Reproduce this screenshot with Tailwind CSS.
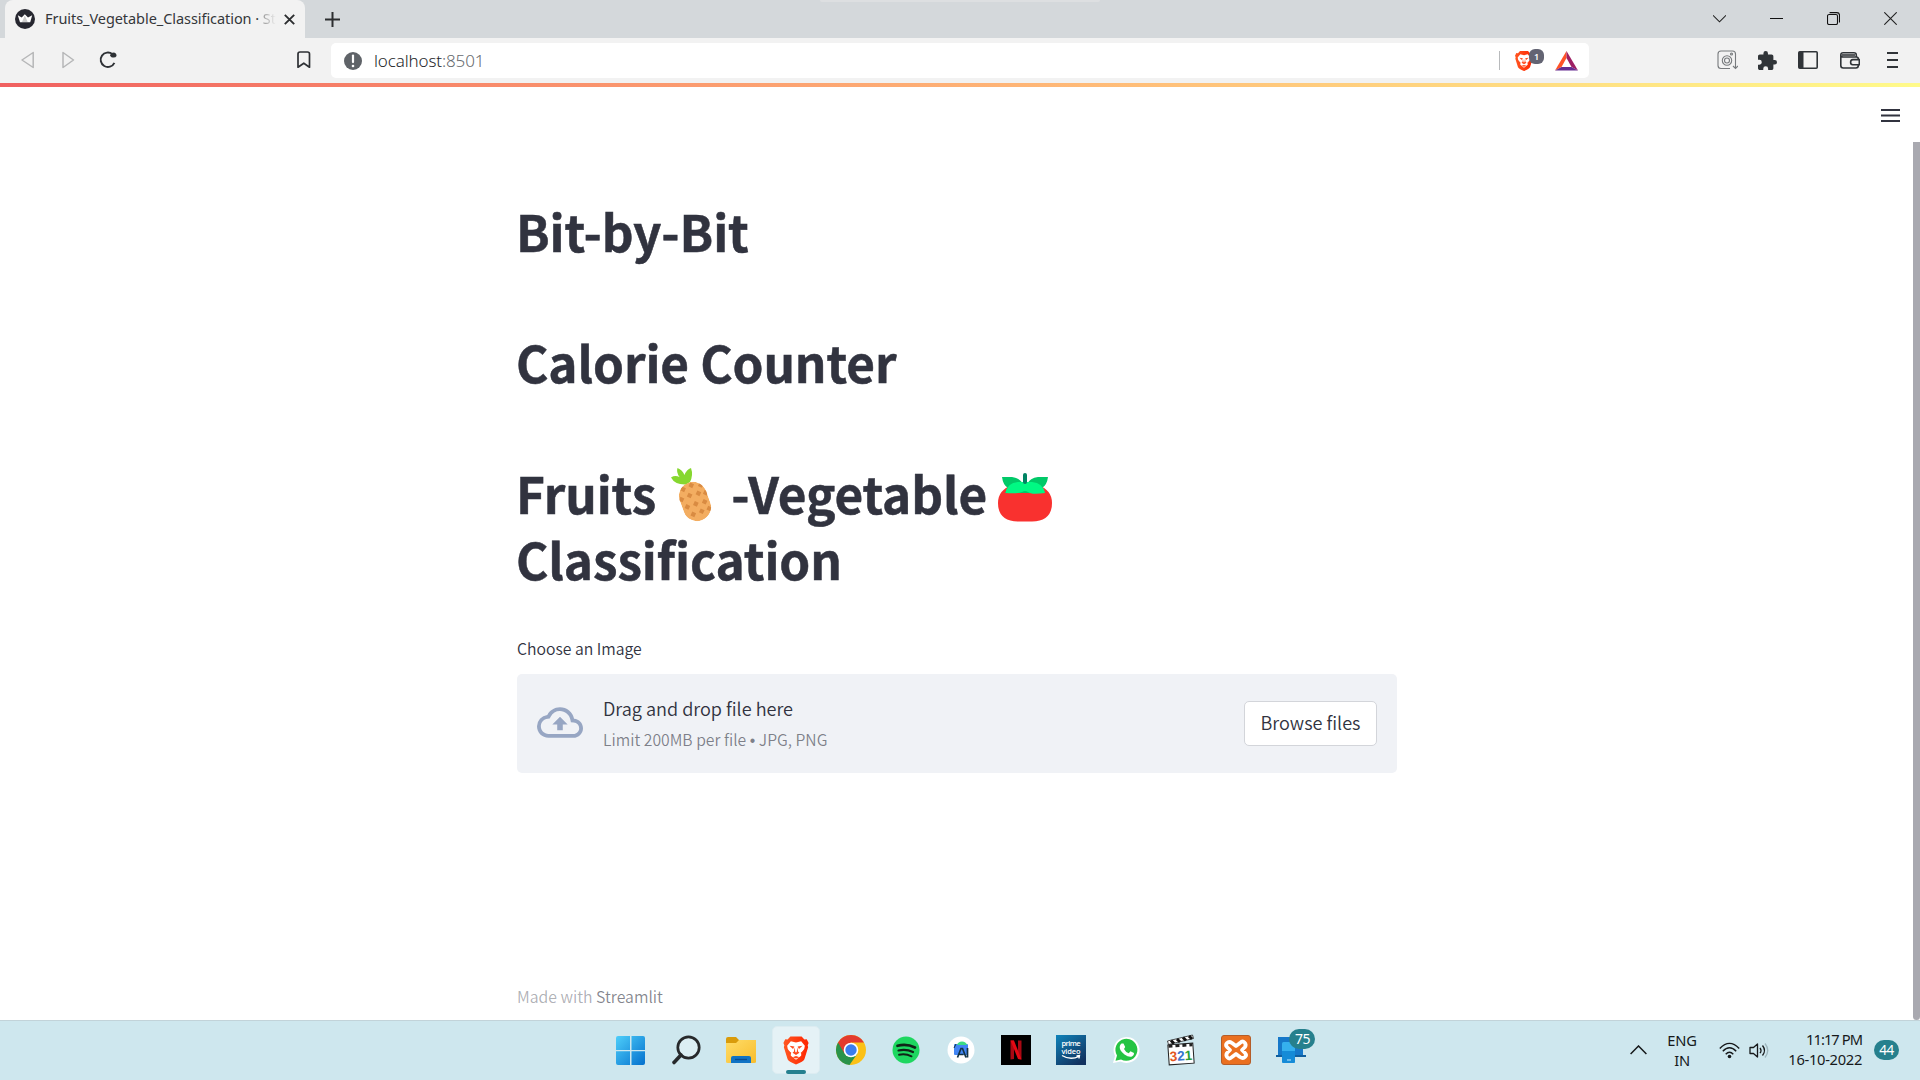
<!DOCTYPE html>
<html lang="en">
<head>
<meta charset="utf-8">
<title>Fruits_Vegetable_Classification · Streamlit</title>
<script src="https://cdn.jsdelivr.net/npm/@tailwindcss/browser@4"></script>
</head>
<body class="flex h-[1080px] w-[1920px] flex-col overflow-hidden bg-white font-['Noto_Sans',sans-serif]">

<!-- Tab strip -->
<header class="relative flex h-[38px] shrink-0 items-center bg-[#d4d8db] pl-[5px]">
  <div class="absolute left-[820px] top-0 h-[2px] w-[280px] rounded-b bg-[#dddfe1]"></div>
  <div class="flex h-full w-[300px] items-center rounded-t-lg bg-[#f2f2f2] pl-[10px]">
    <svg class="h-5 w-5 shrink-0" viewBox="0 0 20 20"><circle cx="10" cy="10" r="10" fill="#262730"/><path d="M2.8 6.2 6.7 8.4 9.8 5.2 13 8.4 17.2 6.2 15.2 13.2H5Z" fill="#fff"/><path d="M7 13 9.8 6.5 12.7 13Z" fill="#ccc"/></svg>
    <div class="ml-[10px] w-[232px] whitespace-nowrap pb-[2px] text-[14.5px] leading-5 tracking-[-0.06px] text-[#35373a]"><span>Fruits_Vegetable_Classification · </span><span class="bg-linear-to-r from-[#9a9a9a] to-[#f2f2f2] bg-clip-text text-transparent">St</span></div>
    <svg class="ml-[7px] h-[11px] w-[11px]" viewBox="0 0 11 11" stroke="#2c2e30" stroke-width="1.9"><path d="m.8.8 9.400 9.400M10.200.8.8 10.200"/></svg>
  </div>
  <svg class="ml-[20px] h-[15px] w-[15px]" viewBox="0 0 15 15" stroke="#2c2e30" stroke-width="2"><path d="M7.500 0v15M0 7.500h15"/></svg>
  <div class="ml-auto flex items-center pr-[23px] pb-px">
    <svg class="mr-[44px] h-[13px] w-[13px]" viewBox="0 0 13 13" fill="none" stroke="#222" stroke-width="1.1"><path d="m0 3.300 6.500 6.500L13 3.300"/></svg>
    <svg class="mr-[44px] h-[13px] w-[13px]" viewBox="0 0 13 13" stroke="#111" stroke-width="1"><path d="M0 6.500h13"/></svg>
    <svg class="mr-[44px] h-[13px] w-[13px]" viewBox="0 0 13 13" fill="none" stroke="#111" stroke-width="1.1"><rect x=".5" y="2.500" width="10" height="10" rx="1.600"/><path d="M2.600.6h7.200q2.700 0 2.700 2.700v7.300"/></svg>
    <svg class="h-[13px] w-[13px]" viewBox="0 0 13 13" stroke="#222" stroke-width="1.1"><path d="m.3.3 12.400 12.400M12.700.3.3 12.700"/></svg>
  </div>
</header>

<!-- Toolbar -->
<nav class="flex h-[45px] shrink-0 items-center bg-[#f2f2f2] pl-[20px]">
  <svg class="-mt-px h-[18px] w-4" viewBox="0 0 16 18" fill="none" stroke="#b6b7b8" stroke-width="1.5" stroke-linejoin="round"><path d="M13.200 1.500v15L2 9Z"/></svg>
  <svg class="-mt-px ml-[25px] h-[18px] w-4" viewBox="0 0 16 18" fill="none" stroke="#b6b7b8" stroke-width="1.5" stroke-linejoin="round"><path d="M2 1.500v15L12.500 9Z"/></svg>
  <svg class="-mt-px ml-[22px] h-[18px] w-[18px]" viewBox="0 0 18 18" fill="none" stroke="#2e3135" stroke-width="1.900"><path d="M13.500 3.200A7.200 7.200 0 1 0 15.400 11.800"/><path d="M11 4.800Q11.500 1.400 15 1.400 17.700 2 17.500 5 16.500 7.200 12.500 6.300Z" fill="#2e3135" stroke="none"/></svg>
  <svg class="-mt-px ml-[180px] h-[18px] w-[14px]" viewBox="0 0 14 18" fill="none" stroke="#2e3135" stroke-width="1.700" stroke-linejoin="round"><path d="M1 3Q1 1 3 1h7.500Q12.500 1 12.500 3v13.200L6.800 12.200 1 16.200Z"/></svg>
  <div class="ml-[20px] flex h-[35px] w-[1258px] items-center rounded-[5px] bg-white pl-[13px]">
    <svg class="h-[18px] w-[18px]" viewBox="0 0 18 18"><circle cx="9" cy="9" r="9" fill="#5f6368"/><path d="M9 3.500v6.600" stroke="#fff" stroke-width="2.200" stroke-linecap="round"/><circle cx="9" cy="14" r="1.300" fill="#fff"/></svg>
    <div class="ml-[12px] text-[17px] leading-6 font-light tracking-[-0.12px] text-[#25272b]">localhost<span class="text-[#686b6f]">:8501</span></div>
    <div class="ml-auto h-[19px] w-px bg-[#b8babc]"></div>
    <div class="relative ml-[14px] mr-[21px] h-[22px] w-[20px]">
      <svg class="h-[22px] w-5" viewBox="0 0 30 32"><use href="#lion"/></svg>
      <span class="absolute -top-px left-[15px] h-[15px] w-[15px] rounded-[6px] bg-[#636473] text-center text-[9px] leading-[15px] font-semibold text-white">1</span>
    </div>
    <svg class="mr-[11px] h-5 w-[23px]" viewBox="0 0 23 20"><path d="M11.500 0 0 19.500 6.500 16 11.500 7Z" fill="#ff5328"/><path d="M11.500 0 23 19.500 16.500 16 11.500 7Z" fill="#9e1f63"/><path d="M0 19.500h23L16.500 16h-10Z" fill="#662d91"/></svg>
  </div>
  <div class="ml-auto flex items-center pr-[22px] pb-px text-[#303438]">
    <svg class="mr-[20px] h-5 w-[21px]" viewBox="0 0 21 20" fill="none" stroke="#777a7d" stroke-width="1.100"><path d="M13 18.500H4Q1 18.500 1 15.500V4Q1 1 4 1h11.500q3 0 3 3v14"/><circle cx="10" cy="10.500" r="4.700"/><circle cx="10" cy="10.500" r="2.500"/><circle cx="14.500" cy="4" r="1"/><path d="m16 16 2.500 2.500L21 16"/></svg>
    <svg class="mr-[21px] h-[19px] w-[19px]" viewBox="2 1 21 21" fill="currentColor"><path d="M20.500 11H19V7c0-1.100-.9-2-2-2h-4V3.500a2.500 2.500 0 0 0-5 0V5H4c-1.100 0-1.990.9-1.990 2v3.800H3.500a2.700 2.700 0 0 1 0 5.400H2V20c0 1.100.9 2 2 2h3.800v-1.500a2.700 2.700 0 0 1 5.400 0V22H17c1.100 0 2-.9 2-2v-4h1.500a2.500 2.500 0 0 0 0-5z"/></svg>
    <svg class="mr-[22px] h-[18px] w-5" viewBox="0 0 20 18"><rect x=".8" y=".8" width="18.400" height="16.400" rx="1" fill="none" stroke="currentColor" stroke-width="1.600"/><path d="M1 1h4.500v16H1Z" fill="currentColor"/></svg>
    <svg class="mr-[27px] h-[17px] w-5" viewBox="0 0 20 17" fill="none" stroke="currentColor" stroke-width="1.600"><path d="M.8 3v10.500q0 2.500 2.500 2.500h12.500q2.500 0 2.500-2.500V7q0-2-2-2H3.200Q.8 5 .8 2.900T3.200.8h10.600q2.500 0 2.500 2.200v2"/><path d="M19.300 7.600h-6.500q-2.200.2-2.200 2.600t2.200 2.600h6.500Z" fill="#f2f2f2"/><path d="M2 3h13"/></svg>
    <svg class="h-4 w-[11px]" viewBox="0 0 11 16" stroke="currentColor" stroke-width="1.800"><path d="M0 1h11M0 8h11M0 15h11"/></svg>
  </div>
</nav>

<!-- Streamlit app -->
<main class="relative flex h-[937px] shrink-0 flex-col bg-white font-['Noto_Sans_CJK_SC',sans-serif] text-[#31333f]">
  <div class="h-1 bg-linear-to-r from-[#f06060] to-[#fffa8a]"></div>
  <svg class="absolute right-5 top-[26px] h-[13px] w-[19px]" viewBox="0 0 19 13" stroke="#31333f" stroke-width="2"><path d="M0 1h19M0 6.500h19M0 12h19"/></svg>
  <div class="absolute bottom-0 right-0 h-[878px] w-[7px] rounded-b bg-[#a9a9b0]"></div>

  <section class="ml-[517px] flex w-[880px] flex-col pt-[111px]">
    <div class="-ml-px flex flex-col gap-[65px] text-[49.5px] leading-[66px] font-bold tracking-[-0.1px] [-webkit-text-stroke:0.5px_#31333f]">
      <h1>Bit-by-Bit</h1>
      <h1>Calorie Counter</h1>
      <h1>
        <span class="flex items-center whitespace-pre"><span>Fruits</span>
          <svg class="mr-[18px] ml-[15px] mt-[4px] h-[54px] w-[42px]" viewBox="0 0 42 54">
            <defs><clipPath id="pineBody"><rect x="10" y="13.500" width="28" height="40" rx="14"/></clipPath></defs>
            <path d="M15 16.500Q4 17 0 9.500q4-2.500 8.500-.5Q5 4 6.500 0q5 2 7 7Q15.500 1.500 20 0q2.500 7-1 14Z" fill="#86d72f"/>
            <g transform="rotate(-20 24 33.500)" clip-path="url(#pineBody)"><rect x="10" y="13.500" width="28" height="40" rx="14" fill="#f3ad61"/><path d="m17 15 3 3-3 3-3-3Zm9-1 3 3-3 3-3-3Zm9 3 3 3-3 3-3-3ZM12 24l3 3-3 3-3-3Zm9-1 3 3-3 3-3-3Zm9 1 3 3-3 3-3-3Zm7 2 3 3-3 3-3-3ZM15 33l3 3-3 3-3-3Zm9 0 3 3-3 3-3-3Zm9 1 3 3-3 3-3-3ZM18 42l3 3-3 3-3-3Zm9 0 3 3-3 3-3-3Zm8 0 3 3-3 3-3-3Z" fill="#d98b42"/></g>
          </svg><span>-Vegetable</span>
          <svg class="ml-[11px] mt-[9px] h-[49px] w-[54px]" viewBox="0 0 54 49"><path d="M14 12h26q14 5 14 18 0 18-20 18.500H20Q0 48 0 30 0 17 14 12Z" fill="#f9312f"/><path d="M4 4h10q8 1 11 7h4q3-6 11-7h10q-1 8-6 11l3 5H7l3-5Q5 12 4 4Z" fill="#00c968"/><path d="M7.500 20Q9 10 20 9h14q11 1 13 11-14 2-17-1-3-2-6 0-4 2-16.500 1Z" fill="#00f983"/><path d="M27 2v7" stroke="#008463" stroke-width="4" stroke-linecap="round"/></svg>
        </span>
        Classification
      </h1>
    </div>
    <p class="mt-[43px] text-[15.75px] leading-7 font-[350]">Choose an Image</p>
    <div class="mt-[11px] flex h-[99px] items-center rounded-[5px] bg-[#f0f2f6] px-5 font-[350]">
      <svg class="-mt-[2px] h-[31px] w-[46px]" viewBox="0 4 24 16" fill="#97a6c3"><path d="M19.350 10.040A7.490 7.490 0 0 0 12 4C9.110 4 6.600 5.640 5.350 8.040A5.994 5.994 0 0 0 0 14c0 3.310 2.690 6 6 6h13c2.760 0 5-2.240 5-5 0-2.640-2.050-4.780-4.650-4.960zM19 18H6c-2.210 0-4-1.790-4-4 0-2.050 1.530-3.760 3.560-3.970l1.070-.110.500-.950A5.469 5.469 0 0 1 12 6c2.620 0 4.880 1.860 5.390 4.430l.300 1.500 1.530.110A2.980 2.980 0 0 1 22 15c0 1.650-1.350 3-3 3zM8 13h2.550v3h2.900v-3H16l-4-4z"/></svg>
      <div class="ml-5 pt-px">
        <div class="text-[18.1px] leading-[30px]">Drag and drop file here</div>
        <div class="mt-[2px] h-[30px] text-[15.75px] leading-[30px] text-[#31333f]/60">Limit 200MB per file <span class="font-['Liberation_Sans']">•</span> JPG, PNG</div>
      </div>
      <button class="ml-auto h-[45px] w-[133px] rounded-[5px] border border-[#d3d5da] bg-white pb-[3px] text-[18.1px] leading-[40px]">Browse files</button>
    </div>
    <footer class="mt-[210px] text-[15.8px] leading-7 font-[350] text-[#31333f]/40">Made with <span class="text-[#31333f]/60">Streamlit</span></footer>
  </section>
</main>

<!-- Taskbar -->
<aside class="flex h-[60px] shrink-0 items-center border-t border-[#c2d3d9] bg-[#cee7ee] pb-px pl-[603px] text-[#16191b]">
  <div class="grid w-[716px] grid-cols-13 justify-items-center">
    <svg class="h-12 w-12" viewBox="0 0 48 48"><defs><linearGradient id="win" x1="9" y1="9" x2="38" y2="38" gradientUnits="userSpaceOnUse"><stop stop-color="#4fd0fb"/><stop offset="1" stop-color="#0572ce"/></linearGradient></defs><path d="M11 10h12v14H9V12q0-2 2-2Zm13.500 0H36q2 0 2 2v12H24.500ZM9 25.300h14V39H11q-2 0-2-2Zm15.500 0H38V37q0 2-2 2H24.500Z" fill="url(#win)"/></svg>
    <svg class="h-12 w-12" viewBox="0 0 48 48" fill="none"><circle cx="26.500" cy="21.500" r="10.700" fill="#dceef3" stroke="#27292b" stroke-width="2.700"/><path d="m19 29-7 7.500" stroke="#27292b" stroke-width="3.600" stroke-linecap="round"/></svg>
    <svg class="h-12 w-12" viewBox="0 0 48 48"><defs><linearGradient id="fold" x2="1" y2="1"><stop stop-color="#ffdc68"/><stop offset="1" stop-color="#f8bd2c"/></linearGradient></defs><path d="M9 13q0-2 2-2h8l3 3h15q2 0 2 2v4H9Z" fill="#d99b0b"/><path d="M9 17h10l3-3h17v22q0 1-2 1H11q-2 0-2-1Z" fill="url(#fold)"/><path d="M14 37v-5q0-2 2-2h16q2 0 2 2v5Z" fill="#1173c4"/><path d="M18 33.500h12" stroke="#094c91" stroke-width="1.300"/></svg>
    <div class="relative flex h-12 w-12 items-center justify-center rounded-[5px] border border-[#dcecf1] bg-[#e5f2f6]">
      <svg class="h-[31px] w-[28px]" viewBox="0 0 30 32">
        <defs><linearGradient id="brave" x2="1"><stop stop-color="#ff5722"/><stop offset="1" stop-color="#ff2500"/></linearGradient></defs>
        <g id="lion"><path d="M9 1h12l3 3.300 2.500-.3 2 4-1 2.500.5 2-4 13Q23 28 15 31 7 28 6 25.500L2 12.500 2.500 10.500 1.500 8l2-4L6 4.300Z" fill="url(#brave)"/><path d="m9.500 6 5.500 1.300L20.500 6l4 4.800-.7 3.500-3 4.200-.3 3-5.500 4.500-5.500-4.500-.3-3-3-4.200-.7-3.500Z" fill="#fff"/><path d="m8 11 5.300.8-1.500 2.700Zm14 0-5.300.8 1.500 2.700ZM13.500 12.500l-.7 4.500-1.500 1.500L15 20.700l3.700-2.200-1.500-1.500-.7-4.500-.8 5.500h-1.400ZM11.200 23.300 15 21.900l3.800 1.400L15 24.500ZM7 16.500l3 2-1 2Zm16 0-3 2 1 2Z" fill="#ff4a1c"/></g>
      </svg>
      <div class="absolute -bottom-px left-[13px] h-1 w-5 rounded-full bg-[#25808f]"></div>
    </div>
    <svg class="h-12 w-12" viewBox="0 0 48 48"><circle cx="24" cy="24" r="15" fill="#fbc116"/><path d="M24 24 11 16.500A15 15 0 0 0 22.500 39L30.500 27.500Z" fill="#29934a"/><path d="M24 16.500h13A15 15 0 0 0 11 16.500l6.500 11Z" fill="#e33b2e"/><circle cx="24" cy="24" r="7.300" fill="#fff"/><circle cx="24" cy="24" r="5.700" fill="#3b7ded"/></svg>
    <svg class="h-12 w-12" viewBox="0 0 48 48" fill="none" stroke="#102417" stroke-linecap="round"><circle cx="24" cy="24" r="13.500" fill="#1ed760" stroke="none"/><path d="M15.500 19.800q9-2.500 17.500 1.700" stroke-width="2.700"/><path d="M16.500 24.500q7.500-2 14.500 1.600" stroke-width="2.200"/><path d="M17 28.800q6.500-1.500 12.500 1.500" stroke-width="1.900"/></svg>
    <svg class="h-12 w-12" viewBox="0 0 48 48"><circle cx="24" cy="24" r="13.500" fill="#fff"/><rect x="17" y="18" width="14" height="11" rx="1" fill="#4285f4"/><path d="M20 19q1-3.500 5-3.500t5 3.500Z" fill="#3ddc84"/><path d="m20.500 31.500 3.500-9h1.500l3.500 9m-6.500-3h4M30.500 22v9.500" fill="none" stroke="#123245" stroke-width="1.700"/><path d="m19 18-2 4" stroke="#123245"/></svg>
    <svg class="h-12 w-12" viewBox="0 0 48 48"><path d="M9 9h30v30H9Z" fill="#000"/><path d="M18.500 14.500h3.500v18.500l-3.500.5Zm7.500 0h3.500v19L26 33Z" fill="#a90813"/><path d="M18.500 14.500H22l7.500 19-3.500-.5Z" fill="#e50914"/></svg>
    <svg class="h-12 w-12" viewBox="0 0 48 48"><defs><linearGradient id="pv" x2=".7" y2="1"><stop stop-color="#0f83ba"/><stop offset="1" stop-color="#12325f"/></linearGradient></defs><path d="M9 9h30v30H9Z" fill="url(#pv)"/><text x="24" y="20" text-anchor="middle" font-size="7.500" font-weight="600" font-family="Open Sans" fill="#fff" textLength="19">prime</text><text x="24" y="27.500" text-anchor="middle" font-size="7.500" font-weight="600" font-family="Open Sans" fill="#fff" textLength="19">video</text><path d="M15 29.500q8 5 17 1m-2.500-.5 3-.5-.5 3" fill="none" stroke="#fff" stroke-width="1.300"/></svg>
    <svg class="h-12 w-12" viewBox="0 0 48 48"><path d="m11 37 2-7A13 13 0 1 1 18.500 35.500Z" fill="#fff"/><path d="m13.500 34.800 1.500-5.300A11 11 0 1 1 19 33.400Z" fill="#25c443"/><path d="M19.500 17.500h2l1.700 3.600-1.200 1.800q1.500 3 4.700 4.300l1.800-1.900 3.500 1.700q.3 2.500-2 3.500-3 1.300-7.500-2-5-4-4.800-7.500.1-2.200 1.800-3.500Z" fill="#fff"/></svg>
    <svg class="h-12 w-12" viewBox="0 0 48 48"><path d="m10.500 15 25-6 1 3.500-25 6Z" fill="#fff" stroke="#222" stroke-width=".8"/><path d="m14 14.500 3 3m3-4.500 3 3m3-4.500 3 3m3-4.500 3 3" stroke="#111" stroke-width="3"/><g transform="rotate(-4 24 28)"><path d="M11.500 18h25v20h-25Z" fill="#fff" stroke="#222"/><path d="M12 19.500h24" stroke="#222" stroke-width="3" stroke-dasharray="4 3"/><g font-family="Liberation Sans" font-size="13.500" font-weight="700"><text x="12.500" y="34.500" fill="#e25523">3</text><text x="20" y="34.500" fill="#3776cf">2</text><text x="27.500" y="34.500" fill="#2aa038">1</text></g></g></svg>
    <svg class="h-12 w-12" viewBox="0 0 48 48"><rect x="9.500" y="9.500" width="29" height="29" rx="2.500" fill="#ea7020" stroke="#b45d29"/><path d="M20 17q-3-2-5 0t0 4l3 3-3 3q-1.500 2.500.5 4.500T20 31l4-3 4 3q3 2 5 0t0-4l-3-3 3-3q1.500-2.500-.5-4.500T28 17l-4 3Z" fill="none" stroke="#fff" stroke-width="3.800" stroke-linejoin="round"/></svg>
    <div class="relative h-12 w-12">
      <svg class="h-12 w-12" viewBox="0 0 48 48"><path d="M11 11h25v19H11Z" fill="#1678c9"/><path d="M9 29h30v2H9Z" fill="#0f5f9f"/><rect x="15" y="16" width="13" height="21" rx="1.500" fill="#35b0ee"/><path d="M15 25h13v10.500q0 1.500-1.500 1.500h-10q-1.500 0-1.500-1.500Z" fill="#158bd7"/><path d="M20 34h4" stroke="#bdeaff"/></svg>
      <span class="absolute left-[22px] top-[3px] h-5 w-[26px] rounded-full bg-[#26808d] text-center text-[14px] leading-5 tracking-[-.5px] text-white">75</span>
    </div>
  </div>
  <div class="ml-auto flex items-center pr-[21px] text-[14.7px] leading-5">
    <svg class="mr-[19px] h-[10px] w-[17px]" viewBox="0 0 17 10" fill="none" stroke="currentColor" stroke-width="1.500"><path d="m.6 9 7.900-8 7.900 8"/></svg>
    <div class="mr-[21px] -mt-px w-[32px] text-center tracking-[-.2px]">ENG<br>IN</div>
    <svg class="mr-[9px] h-[17px] w-[21px]" viewBox="0 0 21 17" fill="none" stroke="currentColor" stroke-width="1.400"><path d="M.8 6.500Q10.500-3.800 20.200 6.500M3.800 9.300q6.700-7 13.400 0M6.700 12.200q3.800-4 7.600 0"/><circle cx="10.500" cy="14.500" r="1.800" fill="currentColor" stroke="none"/></svg>
    <svg class="mr-[19px] h-[17px] w-[20px]" viewBox="0 0 20 17" fill="none" stroke="currentColor" stroke-width="1.300"><path d="M1 5.500h3.500L8.500 2v13l-4-3.500H1Z" stroke-linejoin="round"/><path d="M11 5.800q2 2.700 0 5.400M13.500 3.500q4 5 0 10"/><path d="M16 1.500q5.500 7 0 14" stroke="#9eb6bd"/></svg>
    <div class="mr-3 -mt-[3px] flex w-[74px] flex-col items-end whitespace-nowrap"><div class="tracking-[-.95px]">11:17 PM</div><div class="tracking-[-.3px]">16-10-2022</div></div>
    <div class="h-5 w-[25px] rounded-full bg-[#26808d] text-center text-[13.5px] leading-5 tracking-[-.4px] text-white">44</div>
  </div>
</aside>
</body>
</html>
